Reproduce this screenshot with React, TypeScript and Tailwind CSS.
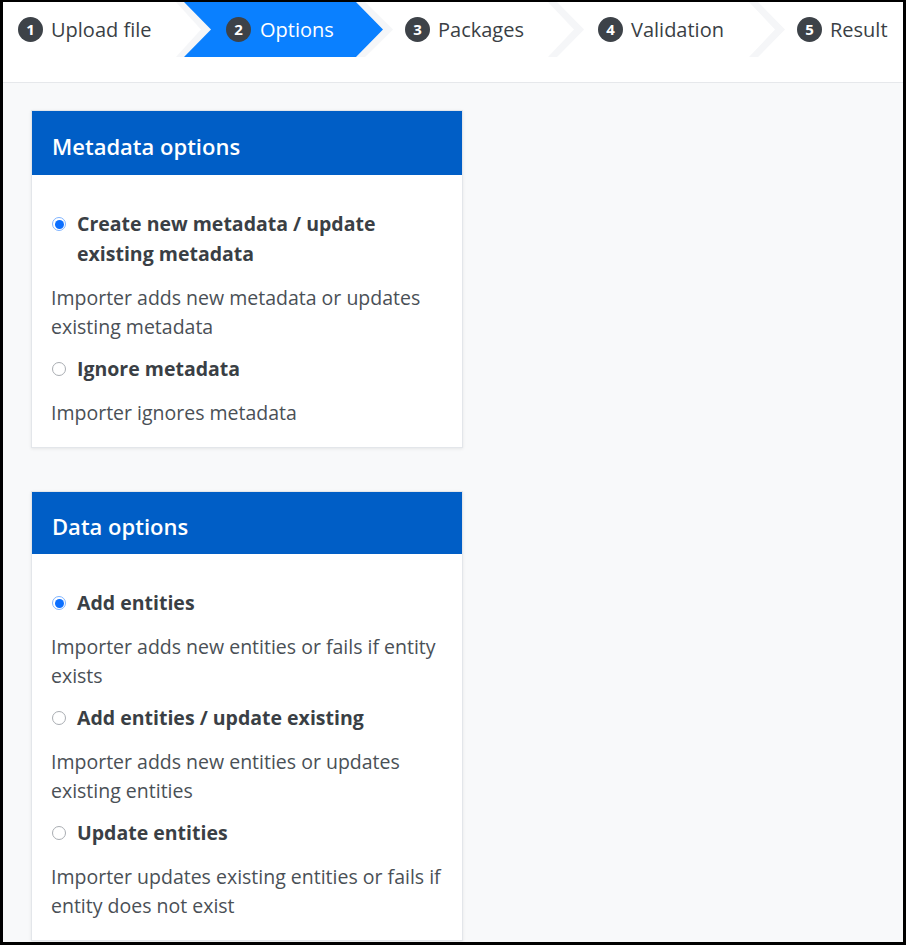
import React from 'react';

type Step = { n: number; label: string; width: string; pad: string };

const font = { fontFamily: '"Open Sans", "Noto Sans", Arial, sans-serif' };

function Badge({ n }: { n: number }) {
  return (
    <span className="flex h-[25px] w-[25px] shrink-0 items-center justify-center rounded-full bg-[#3d4248] text-[15px] font-bold leading-none text-white">
      {n}
    </span>
  );
}

function Separator() {
  return (
    <svg width="36" height="55" viewBox="0 0 36 55" className="shrink-0">
      <polygon points="0,0 9,0 36,27.5 9,55 0,55 26,27.5" fill="#f5f6f8" />
    </svg>
  );
}

function StepItem({ n, label, width, pad }: Step) {
  return (
    <div className={`flex h-full shrink-0 items-center gap-[8px] ${width} ${pad}`}>
      <Badge n={n} />
      <span className="text-[20px] text-[#3a3f45]">{label}</span>
    </div>
  );
}

function ActiveStep() {
  return (
    <div className="relative flex h-full w-[217px] shrink-0 items-center gap-[9px] pl-[50px]">
      <svg width="217" height="55" viewBox="0 0 217 55" className="absolute inset-0">
        <polygon points="0,0 8,0 35,27.5 8,55 0,55 25,27.5" fill="#f5f6f8" />
        <polygon points="180,0 189,0 217,27.5 189,55 180,55 207,27.5" fill="#f5f6f8" />
        <polygon points="8,0 180,0 207,27.5 180,55 8,55 35,27.5" fill="#0a80ff" />
      </svg>
      <span className="relative">
        <Badge n={2} />
      </span>
      <span className="relative text-[20px] text-white">Options</span>
    </div>
  );
}

function Radio({ checked }: { checked?: boolean }) {
  if (checked) {
    return (
      <span className="mt-[8px] ml-[1px] flex h-[14px] w-[14px] shrink-0 items-center justify-center rounded-full border border-[#7fb4ff] bg-white">
        <span className="h-[9px] w-[9px] rounded-full bg-[#0b6fff]" />
      </span>
    );
  }
  return <span className="mt-[8px] ml-[1px] h-[14px] w-[14px] shrink-0 rounded-full border-[1.5px] border-[#a9adb2] bg-white" />;
}

type Opt = { label: string; desc: string; checked?: boolean };

function Card({ title, options, headerH }: { title: string; options: Opt[]; headerH: string }) {
  return (
    <div className="w-[432px] border border-[#e3e6ea] bg-white shadow-[0_1px_3px_rgba(0,0,0,0.08)]">
      <div className={`flex items-center bg-[#005ec6] pl-[20px] pt-[7px] ${headerH}`}>
        <h2 className="text-[22px] font-semibold text-white">{title}</h2>
      </div>
      <div className="px-[19px] pt-[34px] pb-[7px]">
        {options.map((o) => (
          <div key={o.label}>
            <label className="flex gap-[11px]">
              <Radio checked={o.checked} />
              <span className="text-[19.5px] font-bold leading-[30px] text-[#3a3f45]">{o.label}</span>
            </label>
            <p className="mt-[14px] mb-[13px] text-[19.5px] leading-[29px] text-[#4a5056]">{o.desc}</p>
          </div>
        ))}
      </div>
    </div>
  );
}

const steps: Step[] = [
  { n: 3, label: 'Packages', width: 'w-[155px]', pad: 'pl-[12px]' },
  { n: 4, label: 'Validation', width: 'w-[165px]', pad: 'pl-[14px]' },
];

export default function App() {
  return (
    <div className="h-[945px] w-[906px] overflow-hidden border-[3px] border-t-2 border-black bg-[#f8f9fa]" style={font}>
      <nav className="h-[81px] border-b border-[#e6e8eb] bg-white">
        <div className="flex h-[55px] items-center">
          <StepItem n={1} label="Upload file" width="w-[173px]" pad="pl-[15px]" />
          <ActiveStep />
          <StepItem {...steps[0]} />
          <Separator />
          <StepItem {...steps[1]} />
          <Separator />
          <StepItem n={5} label="Result" width="w-[110px]" pad="pl-[12px]" />
        </div>
      </nav>
      <main className="flex flex-col gap-[43px] pl-[28px] pt-[27px]">
        <Card
          title="Metadata options"
          headerH="h-[64px]"
          options={[
            { label: 'Create new metadata / update existing metadata', desc: 'Importer adds new metadata or updates existing metadata', checked: true },
            { label: 'Ignore metadata', desc: 'Importer ignores metadata' },
          ]}
        />
        <Card
          title="Data options"
          headerH="h-[62px]"
          options={[
            { label: 'Add entities', desc: 'Importer adds new entities or fails if entity exists', checked: true },
            { label: 'Add entities / update existing', desc: 'Importer adds new entities or updates existing entities' },
            { label: 'Update entities', desc: 'Importer updates existing entities or fails if entity does not exist' },
          ]}
        />
      </main>
    </div>
  );
}
